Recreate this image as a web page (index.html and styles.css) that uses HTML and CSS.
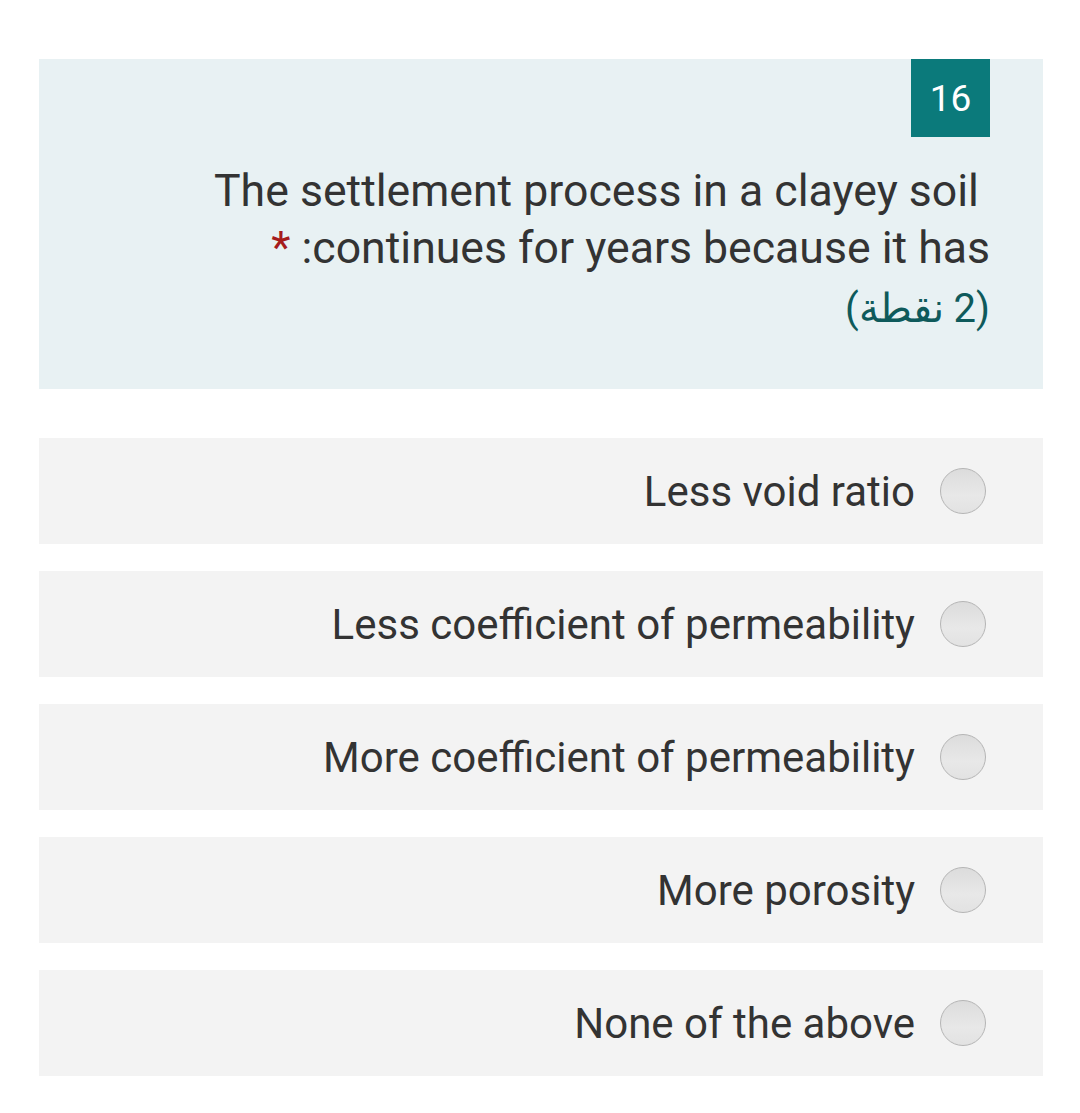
FILE: index.html
```
<!DOCTYPE html>
<html>
<head>
<meta charset="utf-8">
<link rel="stylesheet" href="styles.css">
</head>
<body>
<div class="page">
  <div class="question">
    <div class="badge-row"><div class="badge">16</div></div>
    <div class="qtext">The settlement process in a clayey soil&nbsp; continues for years because it has:<span class="req"> *</span></div>
    <div class="points">(2 نقطة)</div>
  </div>
  <div class="options">
    <label class="option"><span class="radio"></span><span class="otext">Less void ratio</span></label>
    <label class="option"><span class="radio"></span><span class="otext">Less coefficient of permeability</span></label>
    <label class="option"><span class="radio"></span><span class="otext">More coefficient of permeability</span></label>
    <label class="option"><span class="radio"></span><span class="otext">More porosity</span></label>
    <label class="option"><span class="radio"></span><span class="otext">None of the above</span></label>
  </div>
</div>
</body>
</html>
```
FILE: styles.css
```
html, body {
  margin: 0;
  padding: 0;
  background: #ffffff;
}
body {
  font-family: Roboto, "Noto Sans", sans-serif;
  color: #333333;
}
.page {
  padding: 59px 37px 0 39px;
  direction: rtl;
}
.question {
  background: #e8f1f3;
  padding: 0 53px 52px 53px;
  display: flex;
  flex-direction: column;
}
.badge-row {
  display: flex;
}
.badge {
  width: 79px;
  height: 78px;
  background: #0b7a7b;
  color: #ffffff;
  font-size: 37px;
  display: flex;
  align-items: center;
  justify-content: center;
}
.qtext {
  margin-top: 26px;
  font-size: 44.6px;
  line-height: 57px;
  color: #333333;
}
.req {
  color: #a61c1c;
}
.points {
  margin-top: 3px;
  font-size: 40px;
  line-height: 57px;
  color: #0e5a5b;
}
.options {
  margin-top: 49px;
  display: flex;
  flex-direction: column;
  gap: 27px;
}
.option {
  background: #f3f3f3;
  height: 106px;
  display: flex;
  align-items: center;
  padding-right: 57px;
  gap: 25px;
}
.radio {
  width: 44px;
  height: 44px;
  border-radius: 50%;
  border: 1px solid #b5b5b5;
  background: linear-gradient(#dcdcdc, #e8e8e8 60%, #e2e2e2);
  flex: none;
}
.otext {
  font-size: 42px;
  color: #333333;
}
```
